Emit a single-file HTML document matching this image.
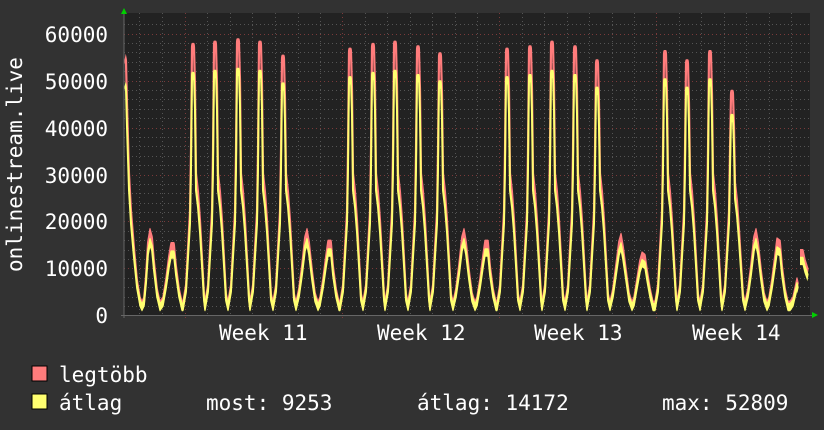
<!DOCTYPE html>
<html><head><meta charset="utf-8"><style>
html,body{margin:0;padding:0;background:#323232;}
body{width:824px;height:430px;overflow:hidden;position:relative;font-family:"DejaVu Sans Mono","Liberation Mono",monospace;color:#fff;}
</style></head><body>
<svg width="824" height="430" viewBox="0 0 824 430" xmlns="http://www.w3.org/2000/svg" style="position:absolute;left:0;top:0">
<rect x="0" y="0" width="824" height="430" fill="#323232"/>
<rect x="124" y="13" width="686" height="302" fill="#222222"/>
<g stroke="#555" stroke-width="1" stroke-dasharray="1,3" fill="none">
<path d="M124 24.5H810M124 43.5H810M124 52.5H810M124 62.5H810M124 71.5H810M124 90.5H810M124 99.5H810M124 109.5H810M124 118.5H810M124 137.5H810M124 146.5H810M124 156.5H810M124 165.5H810M124 184.5H810M124 193.5H810M124 203.5H810M124 212.5H810M124 231.5H810M124 240.5H810M124 250.5H810M124 259.5H810M124 278.5H810M124 287.5H810M124 297.5H810M124 306.5H810"/>
<path d="M139.5 13V315M162.5 13V315M207.5 13V315M230.5 13V315M252.5 13V315M275.5 13V315M298.5 13V315M320.5 13V315M365.5 13V315M387.5 13V315M410.5 13V315M432.5 13V315M455.5 13V315M477.5 13V315M522.5 13V315M544.5 13V315M567.5 13V315M589.5 13V315M612.5 13V315M634.5 13V315M679.5 13V315M701.5 13V315M724.5 13V315M746.5 13V315M769.5 13V315M791.5 13V315"/>
</g>
<g stroke="#7a3a3a" stroke-width="1" stroke-dasharray="1,3" fill="none">
<path d="M124 34.5H810M124 81.5H810M124 128.5H810M124 175.5H810M124 221.5H810M124 268.5H810"/>
<path d="M185.5 13V318M342.5 13V318M499.5 13V318M656.5 13V318"/>
</g>
<defs>
<polyline id="d1" points="125,55 126,54 127,45 129,30 131,22 134,14 137,7 140,3 142,2 144,3 146,8 148,15 150,17.5 152,16 154,11 157,5 160,2 163,3 166,7 169,12 171,14.5 174,14.5 176,10 179,5 182,2 183,2 186,6 188,14 190,22 191,35 192,57 194,57 195,49 196,30 198,26 200,20 202,12 204,4 205,2 208,6 210,14 212,22 213,35 214,57.5 216,57.5 217,49 218,30 220,26 222,20 224,12 226,4 228,2 231,6 233,14 235,22 236,35 237,58 239,58 240,50 241,30 243,26 245,20 247,12 249,4 250,2 253,6 255,14 257,22 258,35 259,57.5 261,57.5 262,49 263,30 265,26 267,20 269,12 271,4 273,2 276,6 278,14 280,22 281,35 282,54.5 284,54.5 285,46 286,30 288,26 290,20 292,12 294,4 296,2 299,5 302,10 305,16 307,17.5 309,15 312,9 315,4 318,2 320,3 323,7 326,12 328,15 331,15 333,10 336,5 339,2 340,2 343,6 345,14 347,22 348,35 349,56 351,56 352,48 353,30 355,26 357,20 359,12 361,4 363,2 366,6 368,14 370,22 371,35 372,57 374,57 375,49 376,30 378,26 380,20 382,12 384,4 385,2 388,6 390,14 392,22 393,35 394,57.5 396,57.5 397,49 398,30 400,26 402,20 404,12 406,4 408,2 411,6 413,14 415,22 416,35 417,56.5 419,56.5 420,48 421,30 423,26 425,20 427,12 429,4 430,2 433,6 435,14 437,22 438,35 439,55 441,55 442,47 443,30 445,26 447,20 449,12 451,4 453,2 456,5 459,10 462,16 464,17.5 466,15 469,9 472,4 475,2 477,3 480,7 483,12 485,15 488,15 490,10 493,5 496,2 497,2 500,6 502,14 504,22 505,35 506,56 508,56 509,48 510,30 512,26 514,20 516,12 518,4 520,2 523,6 525,14 527,22 528,35 529,56.5 531,56.5 532,48 533,30 535,26 537,20 539,12 541,4 542,2 545,6 547,14 549,22 550,35 551,57.5 553,57.5 554,49 555,30 557,26 559,20 561,12 563,4 565,2 568,6 570,14 572,22 573,35 574,56.5 576,56.5 577,48 578,30 580,26 582,20 584,12 586,4 587,2 590,6 592,14 594,22 595,35 596,53.5 598,53.5 599,45 600,30 602,26 604,20 606,12 608,4 610,2 613,5 616,10 619,15 621,16.5 623,14 626,9 629,4 632,2 634,3 637,7 640,11 642,12.5 645,12 647,9 650,5 653,2 655,2 658,6 660,14 662,22 663,35 664,55.5 666,55.5 667,47 668,30 670,26 672,20 674,12 676,4 677,2 680,6 682,14 684,22 685,35 686,53.5 688,53.5 689,45 690,30 692,26 694,20 696,12 698,4 700,2 703,6 705,14 707,22 708,35 709,55.5 711,55.5 712,47 713,30 715,26 717,20 719,12 721,4 722,2 725,6 727,14 729,22 730,35 731,47 733,47 734,40 735,28 737,24 739,18 741,11 743,4 745,2 748,5 751,10 754,16 756,17.5 758,15 761,9 764,4 767,2 769,3 772,7 775,12 777,15.5 780,15 782,10 785,5 788,2 790,2 793,3 795,5 797,7 798,6"/>
<polyline id="d2" points="800,13 803,13 805,11 808,9"/>
</defs>
<g fill="none" stroke-linejoin="round">
<g transform="translate(0,315) scale(1,-4.683)">
<use href="#d1" stroke="#ff7c7c" stroke-width="2.2" vector-effect="non-scaling-stroke"/>
<use href="#d2" stroke="#ff7c7c" stroke-width="2.2" vector-effect="non-scaling-stroke"/>
</g>
<g transform="translate(0,315.5) scale(1,-4.2)">
<use href="#d1" stroke="#ffff70" stroke-width="2" vector-effect="non-scaling-stroke"/>
<use href="#d2" stroke="#ffff70" stroke-width="2" vector-effect="non-scaling-stroke"/>
</g>
</g>
<path d="M124 14V318M121 315.5H812" stroke="#666" stroke-width="1"/>
<polygon points="121,14 127,14 124,8" fill="#00d000"/>
<polygon points="812,312 812,318 818,315" fill="#00d000"/>
<g font-family="DejaVu Sans Mono, Liberation Mono, monospace" font-size="21" fill="#fff">
<g text-anchor="end">
<text x="108" y="42">60000</text>
<text x="108" y="89">50000</text>
<text x="108" y="136">40000</text>
<text x="108" y="183">30000</text>
<text x="108" y="229">20000</text>
<text x="108" y="276">10000</text>
<text x="108" y="323">0</text>
</g>
<text x="219" y="340">Week 11</text>
<text x="377" y="340">Week 12</text>
<text x="534" y="340">Week 13</text>
<text x="692" y="340">Week 14</text>
<text transform="translate(22,272) rotate(-90)">onlinestream.live</text>
<text x="59" y="382">legtöbb</text>
<text x="59" y="410">átlag</text>
<text x="206" y="410">most: 9253</text>
<text x="417" y="410">átlag: 14172</text>
<text x="662" y="410">max: 52809</text>
</g>
<rect x="32" y="366" width="15" height="15" fill="#ff7c7c" stroke="#000" stroke-width="1"/>
<rect x="32" y="394" width="15" height="15" fill="#ffff70" stroke="#000" stroke-width="1"/>
</svg>
</body></html>
